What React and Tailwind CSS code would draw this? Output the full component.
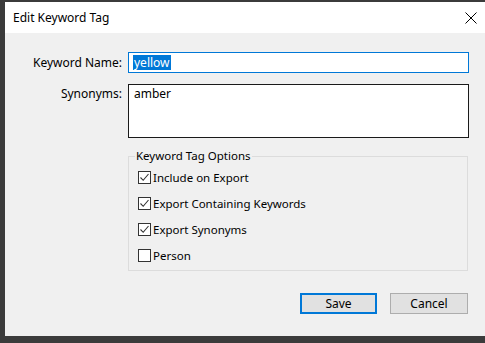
import React from 'react';

const FONT = { fontFamily: '"Noto Sans", "Segoe UI", sans-serif' };

function Check({ checked, label }) {
  return (
    <div className="flex items-center h-[13px]">
      <span className="w-[13px] h-[13px] border border-[#333333] bg-white flex items-center justify-center shrink-0">
        {checked && (
          <svg width="11" height="11" viewBox="0 0 11 11">
            <path d="M1.5 5.5 L4.2 8.3 L9.5 2" fill="none" stroke="#333333" strokeWidth="1.1" />
          </svg>
        )}
      </span>
      <span className="ml-[2px] text-[11.5px] text-black leading-none">{label}</span>
    </div>
  );
}

export default function App() {
  return (
    <div className="w-[485px] h-[343px] bg-[#3b3b3b] pl-[5px] pt-[2px] overflow-hidden" style={FONT}>
      <div className="w-[480px] h-[334px] bg-[#f0f0f0] flex flex-col">
        {/* title bar */}
        <div className="h-[31px] bg-white flex items-center justify-between pl-[8px] pr-[8px] shrink-0">
          <span className="text-[12px] text-black">Edit Keyword Tag</span>
          <svg width="12" height="12" viewBox="0 0 12 12">
            <path d="M0.5 0.5 L11.5 11.5 M11.5 0.5 L0.5 11.5" stroke="#000" strokeWidth="1" />
          </svg>
        </div>

        <div className="grid grid-cols-[117px_341px] gap-x-[6px] mt-[19px] items-start">
          <div className="h-[21px] flex items-center justify-end text-[12px] text-black">Keyword Name:</div>
          <div className="h-[21px] border border-[#0078d7] bg-white flex items-center pl-[4px]">
            <span className="bg-[#0078d7] text-white text-[12px] leading-[15px] px-[1px]">yellow</span>
          </div>

          <div className="h-[20px] mt-[11px] flex items-center justify-end text-[12px] text-black">Synonyms:</div>
          <div className="h-[54px] mt-[11px] border border-[#1a1a1a] bg-white pl-[5px] pt-[1px] text-[12px] text-black leading-[16px]">
            amber
          </div>
        </div>

        <div className="ml-[123px] mt-[18px] w-[340px] h-[115px] border border-[#dcdcdc] relative">
          <span className="absolute -top-[8px] left-[6px] px-[1px] bg-[#f0f0f0] text-[11.5px] text-black leading-[14px]">
            Keyword Tag Options
          </span>
          <div className="flex flex-col gap-[13px] pt-[14px] pl-[9px]">
            <Check checked label="Include on Export" />
            <Check checked label="Export Containing Keywords" />
            <Check checked label="Export Synonyms" />
            <Check label="Person" />
          </div>
        </div>

        <div className="flex justify-end gap-[13px] pr-[17px] mt-[22px]">
          <button className="w-[77px] h-[21px] border-2 border-[#0078d7] bg-[#e1e1e1] text-[12px] text-black flex items-center justify-center">
            Save
          </button>
          <button className="w-[78px] h-[21px] border border-[#adadad] bg-[#e1e1e1] text-[12px] text-black flex items-center justify-center">
            Cancel
          </button>
        </div>
      </div>
    </div>
  );
}
